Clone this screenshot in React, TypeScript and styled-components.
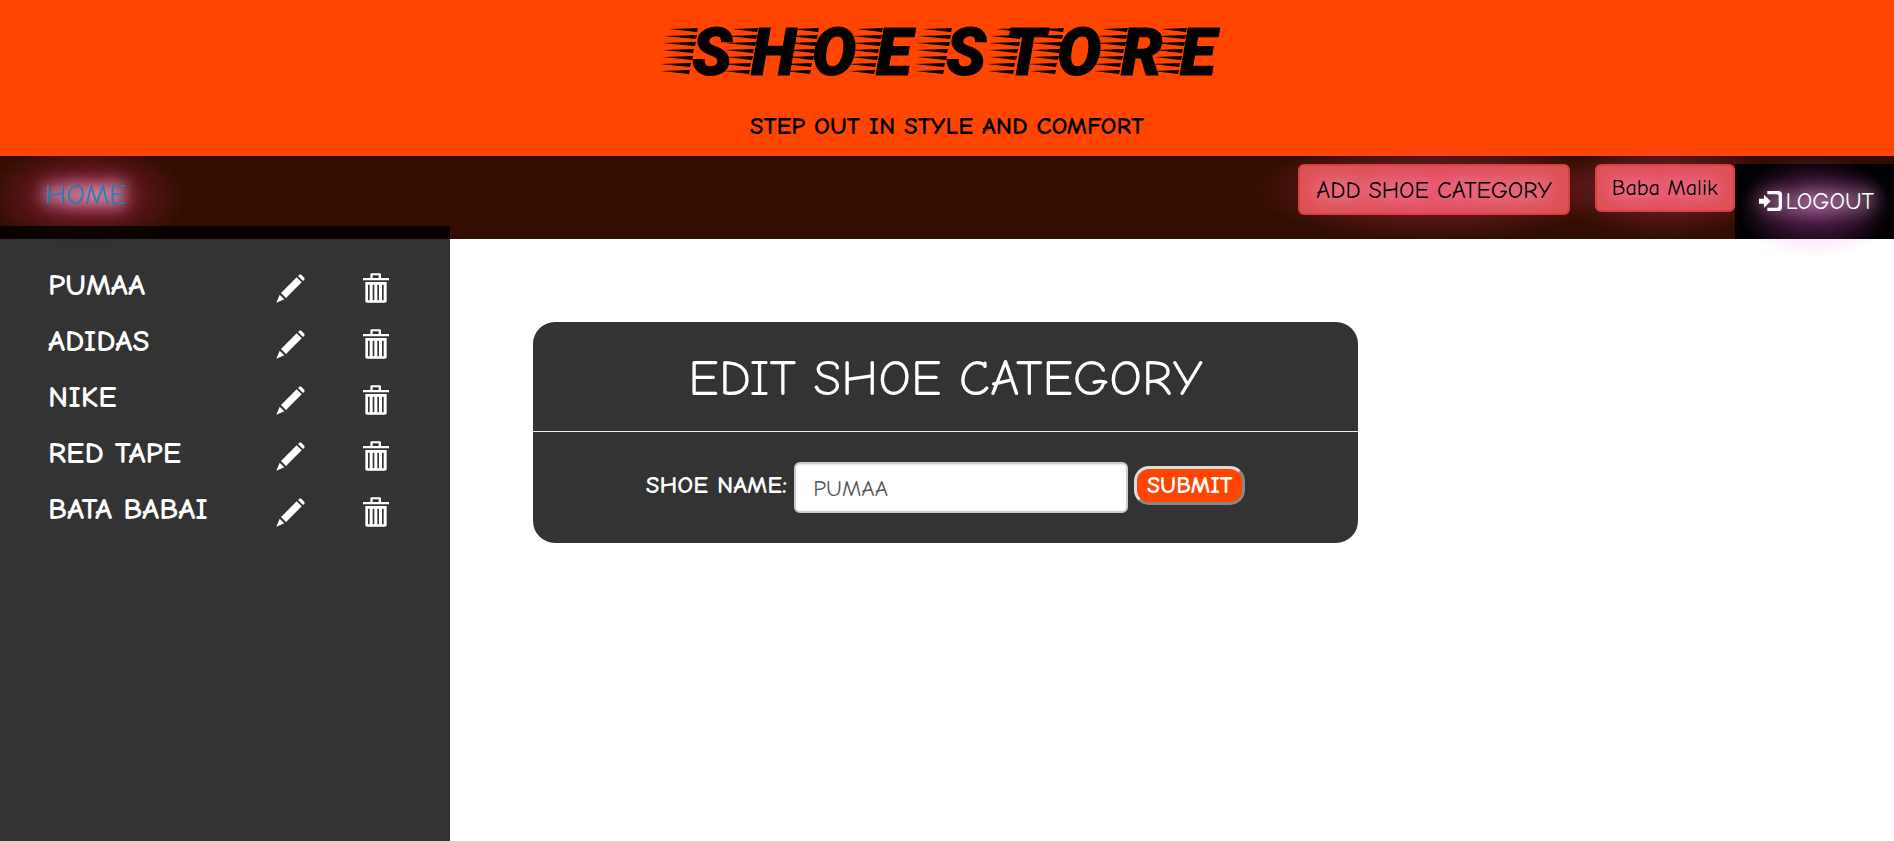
import React from 'react';
import styled, { createGlobalStyle, css } from 'styled-components';

const GlobalStyle = createGlobalStyle`
  *, *::before, *::after { box-sizing: border-box; }
  body {
    margin: 0;
    background: #fff;
    font-family: 'Comic Neue', Lato, sans-serif;
    overflow: hidden;
  }
  a { text-decoration: none; }
`;

/* Wide soft light behind a nav item; the text-shadow of the item adds the bright core. */
const halo = css<{ $glow: string; $spread: string }>`
  position: relative;
  isolation: isolate;

  &::before {
    content: '';
    position: absolute;
    inset: ${(p) => p.$spread};
    z-index: -1;
    background: radial-gradient(closest-side, rgba(${(p) => p.$glow}, 0.36), rgba(${(p) => p.$glow}, 0.16) 60%, rgba(${(p) => p.$glow}, 0));
    pointer-events: none;
  }
`;

const Page = styled.div`
  display: flex;
  flex-direction: column;
  min-height: 100vh;
`;

const Banner = styled.header`
  background: #ff4500;
`;

const Brand = styled.div`
  display: flex;
  flex-direction: column;
  align-items: center;
  padding: 11px 0 16px;
`;

const BrandName = styled.h1`
  display: flex;
  margin: 0 0 19px;
  line-height: 1;
`;

const LogoText = styled.text`
  font-family: Roboto, sans-serif;
  font-size: 66px;
  font-weight: 900;
  font-style: italic;
  stroke: #000;
  stroke-width: 1px;
`;

const Tagline = styled.p`
  margin: 0;
  font-size: 25px;
  line-height: 28px;
  font-weight: 700;
  color: #000;
`;

const NavBar = styled.nav`
  display: flex;
  align-items: flex-start;
  padding: 8px 0 0 45px;
  background: rgba(0, 0, 0, 0.8);
`;

const HomeLink = styled.a<{ $glow: string; $spread: string }>`
  margin-right: auto;
  padding-top: 13px;
  font-size: 29px;
  line-height: 36px;
  color: #337ab7;
  text-shadow: 0 0 14px #fff, 0 0 18px #ffb0d8, 0 0 24px #ff80c0, 0 0 28px #ff60a0;
  ${halo}
`;

const NavButton = styled.button<{ $compact?: boolean; $glow: string; $spread: string }>`
  height: ${(p) => (p.$compact ? 48 : 51)}px;
  margin-left: 25px;
  padding: ${(p) => (p.$compact ? '6px 15px' : '6px 16px')};
  border: 2px solid #d43f3a;
  border-radius: 6px;
  background: #d9534f;
  color: #000;
  font-family: inherit;
  font-size: ${(p) => (p.$compact ? 22 : 24)}px;
  text-shadow: 0 0 18px #ffd0e8, 0 0 26px #ff80b8;
  ${halo}
`;

const LogoutLink = styled.a<{ $glow: string; $spread: string }>`
  display: flex;
  align-items: center;
  gap: 4px;
  height: 75px;
  padding: 0 20px 2px 24px;
  background: #000;
  color: #fff;
  font-size: 24px;
  text-shadow: 0 0 16px #fff, 0 0 22px #ffb0e0, 0 0 30px #ff70d0;
  ${halo}

  svg {
    filter: drop-shadow(0 0 8px rgba(255, 190, 224, 0.8));
  }
`;

const Content = styled.div`
  display: flex;
  flex: 1;
  align-items: stretch;
`;

const Sidebar = styled.aside`
  position: relative;
  flex: 0 0 450px;
  margin-top: -13px;
  padding: 31px 0 0 48px;
  background: rgba(0, 0, 0, 0.8);
`;

const CategoryList = styled.ul`
  margin: 0;
  padding: 0;
  list-style: none;
`;

const CategoryRow = styled.li`
  display: grid;
  grid-template-columns: 228px 87px 1fr;
  align-items: center;
  height: 56px;
`;

const CategoryLink = styled.a`
  color: #fff;
  font-size: 31px;
  font-weight: 700;
`;

const IconLink = styled.a`
  display: flex;
  padding-top: 6px;
  color: #fff;
`;

const Main = styled.main`
  flex: 1;
  padding: 83px 83px 0;
`;

const Card = styled.section`
  max-width: 825px;
  border-radius: 22px;
  background: #333;
  color: #fff;
`;

const CardTitle = styled.h2`
  margin: 0;
  padding: 26px 0 22px;
  border-bottom: 1px solid #eee;
  font-size: 51px;
  line-height: 61px;
  font-weight: 400;
  text-align: center;
`;

const CategoryForm = styled.form`
  display: flex;
  align-items: center;
  justify-content: center;
  padding: 30px 0;
`;

const FieldLabel = styled.label`
  margin-right: 7px;
  padding-bottom: 6px;
  font-size: 25px;
  font-weight: 700;
`;

const TextInput = styled.input`
  width: 334px;
  height: 51px;
  padding: 2px 17px 0;
  border: 2px solid #ccc;
  border-radius: 6px;
  background: #fff;
  box-shadow: inset 0 1px 2px rgba(0, 0, 0, 0.1);
  color: #555;
  font-family: inherit;
  font-size: 23px;
`;

const SubmitButton = styled.button`
  width: 111px;
  height: 39px;
  margin: 0 0 4px 6px;
  padding: 0 0 2px;
  border: 3px solid;
  border-color: #ddd #888 #888 #ddd;
  border-radius: 15px;
  background: #ff4500;
  color: #fff;
  font-family: inherit;
  font-size: 24px;
  font-weight: 700;
  line-height: 28px;
`;

const LETTER_X = [32, 91, 152, 216, 255, 286, 345, 397, 461, 520];
const STREAK_X = [32, 92, 153, 217, 286, 356, 398, 462, 521];
const STREAK_LENGTHS = [28, 32, 33, 31, 29, 30, 28];

function Streaks({ x, short }: { x: number; short: boolean }) {
  const d = STREAK_LENGTHS.map((len, i) => {
    const y = 8 + i * 7;
    const right = x - 4 + Math.round((55 - y) * 0.2);
    const left = right - len + (short ? 3 : 0);
    return `M${left} ${y + 1}L${right + 1} ${y}L${right} ${y + 4}Z`;
  }).join('');
  return <path d={d} />;
}

function Logo() {
  return (
    <svg width="574" height="82" viewBox="0 -9 574 82" fill="#000">
      {STREAK_X.map((x, i) => (
        <Streaks key={x} x={x} short={i % 4 !== 0 || i === 8} />
      ))}
      <LogoText x={LETTER_X.join(' ')} y="55">
        SHOE STORE
      </LogoText>
    </svg>
  );
}

function PencilIcon() {
  return (
    <svg width="29" height="29" viewBox="0 0 87 87" fill="currentColor" aria-hidden="true">
      <path d="M1 86 11 62 25 76ZM15 57 62 10 77 25 30 72ZM66 6 70 2Q73 0 76 2L85 12Q87 14 85 17L81 21Z" />
    </svg>
  );
}

function TrashIcon() {
  return (
    <svg width="26" height="30" viewBox="0 0 78 90" fill="currentColor" aria-hidden="true">
      <path
        fillRule="evenodd"
        d="M0 15H22V5Q22 1 26 1H50Q54 1 54 5V15H78V22H0ZM29 7V15H47V7ZM7 27H71V84Q71 89 66 89H12Q7 89 7 84ZM15 35V82H20V35ZM29 35V82H34V35ZM43 35V82H48V35ZM57 35V82H62V35Z"
      />
    </svg>
  );
}

function LogInIcon() {
  return (
    <svg width="23" height="20" viewBox="0 0 69 60" fill="currentColor" aria-hidden="true">
      <path d="M0 23H15V11L35 31 15 50V38H0ZM25 0H58Q69 0 69 11V49Q69 60 58 60H25V50H53Q59 50 59 44V16Q59 10 53 10H25Z" />
    </svg>
  );
}

const categories = ['PUMAA', 'ADIDAS', 'NIKE', 'RED TAPE', 'BATA BABAI'];

export default function App() {
  return (
    <Page>
      <GlobalStyle />
      <Banner>
        <Brand>
          <BrandName>
            <Logo />
          </BrandName>
          <Tagline>STEP OUT IN STYLE AND COMFORT</Tagline>
        </Brand>
        <NavBar>
          <HomeLink href="#home" $glow="255, 50, 130" $spread="-20px -60px -36px">
            HOME
          </HomeLink>
          <NavButton type="button" $glow="255, 60, 130" $spread="-26px -48px">
            ADD SHOE CATEGORY
          </NavButton>
          <NavButton type="button" $compact $glow="255, 60, 130" $spread="-26px -44px">
            Baba Malik
          </NavButton>
          <LogoutLink href="#logout" $glow="255, 100, 230" $spread="-8px 0 -20px">
            <LogInIcon />
            LOGOUT
          </LogoutLink>
        </NavBar>
      </Banner>
      <Content>
        <Sidebar>
          <CategoryList>
            {categories.map((name) => (
              <CategoryRow key={name}>
                <CategoryLink href="#category">{name}</CategoryLink>
                <IconLink href="#edit" aria-label={`Edit ${name}`}>
                  <PencilIcon />
                </IconLink>
                <IconLink href="#delete" aria-label={`Delete ${name}`}>
                  <TrashIcon />
                </IconLink>
              </CategoryRow>
            ))}
          </CategoryList>
        </Sidebar>
        <Main>
          <Card>
            <CardTitle>EDIT SHOE CATEGORY</CardTitle>
            <CategoryForm onSubmit={(e) => e.preventDefault()}>
              <FieldLabel htmlFor="shoe-name">SHOE NAME:</FieldLabel>
              <TextInput id="shoe-name" type="text" defaultValue="PUMAA" />
              <SubmitButton type="submit">SUBMIT</SubmitButton>
            </CategoryForm>
          </Card>
        </Main>
      </Content>
    </Page>
  );
}
